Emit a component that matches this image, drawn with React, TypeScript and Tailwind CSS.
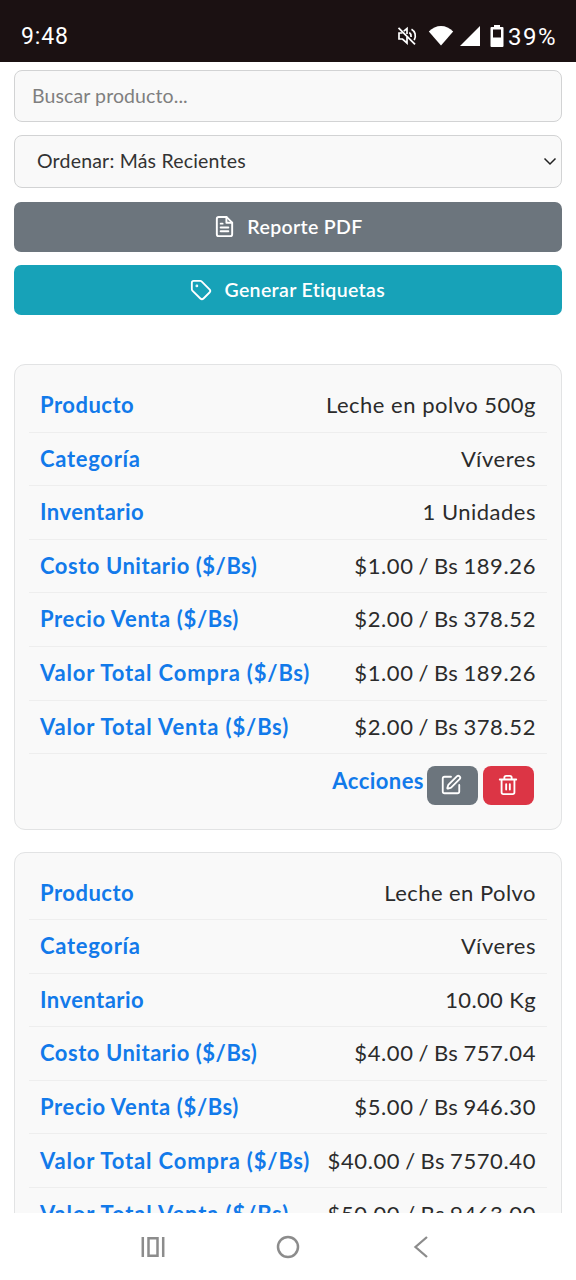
import React from "react";
import { SquarePen, Tag } from "lucide-react";

interface Field {
  label: string;
  value: string;
  labelClass: string;
  valueClass: string;
}

// Price pairs run a bit wider per digit, with tighter gaps around the slash
const price = "tracking-[0.6px] [word-spacing:-1.3px]";

const products: Field[][] = [
  [
    { label: "Producto", value: "Leche en polvo 500g", labelClass: "tracking-[0.5px]", valueClass: "tracking-[0.5px]" },
    { label: "Categoría", value: "Víveres", labelClass: "tracking-[0.7px]", valueClass: "tracking-[0.55px]" },
    { label: "Inventario", value: "1 Unidades", labelClass: "tracking-[0.45px]", valueClass: "tracking-[0.5px]" },
    { label: "Costo Unitario ($/Bs)", value: "$1.00 / Bs 189.26", labelClass: "tracking-[0.53px]", valueClass: price },
    { label: "Precio Venta ($/Bs)", value: "$2.00 / Bs 378.52", labelClass: "tracking-[0.63px]", valueClass: price },
    { label: "Valor Total Compra ($/Bs)", value: "$1.00 / Bs 189.26", labelClass: "tracking-[0.84px]", valueClass: price },
    { label: "Valor Total Venta ($/Bs)", value: "$2.00 / Bs 378.52", labelClass: "tracking-[0.87px]", valueClass: price },
  ],
  [
    { label: "Producto", value: "Leche en Polvo", labelClass: "tracking-[0.5px]", valueClass: "tracking-[0.45px]" },
    { label: "Categoría", value: "Víveres", labelClass: "tracking-[0.7px]", valueClass: "tracking-[0.55px]" },
    { label: "Inventario", value: "10.00 Kg", labelClass: "tracking-[0.45px]", valueClass: "tracking-[0.37px]" },
    { label: "Costo Unitario ($/Bs)", value: "$4.00 / Bs 757.04", labelClass: "tracking-[0.53px]", valueClass: price },
    { label: "Precio Venta ($/Bs)", value: "$5.00 / Bs 946.30", labelClass: "tracking-[0.63px]", valueClass: price },
    { label: "Valor Total Compra ($/Bs)", value: "$40.00 / Bs 7570.40", labelClass: "tracking-[0.84px]", valueClass: price },
    { label: "Valor Total Venta ($/Bs)", value: "$50.00 / Bs 9463.00", labelClass: "tracking-[0.87px]", valueClass: price },
  ],
];

const StatusBar: React.FC = () => (
  <div className="flex h-[61.5px] w-full shrink-0 items-center justify-between bg-[#1b1112] pt-[10px] pr-[19px] pl-[21px] font-['Roboto',sans-serif] text-white">
    <span className="pt-[2px] text-[23px] leading-none tracking-[0.9px]">9:48</span>
    <div className="flex items-center">
      {/* Muted speaker */}
      <svg width="20" height="20" viewBox="0 0 20 20" fill="none" stroke="white" strokeWidth="1.7" className="mr-[11px]">
        <path d="M1.500 1.800l16.500 16.500" />
        <path d="M5.500 7H2v6h3.500l4.500 4v-6M6.800 5.200L10 2.500v5.500" />
        <path d="M12.300 6.500c1.300.8 1.900 2.200 1.800 4.500M14.500 3.200c3.600 2 5 6.500 2.700 11" />
      </svg>
      {/* Wifi */}
      <svg width="26" height="21" viewBox="0 0 26 21" fill="white" className="mr-[6px]">
        <path d="M13 20.500L.8 6.500C7.500-1 18.500-1 25.200 6.500z" />
      </svg>
      {/* Signal */}
      <svg width="20" height="20" viewBox="0 0 20 20" fill="white" className="mr-[10px]">
        <path d="M20 0v20H0z" />
      </svg>
      {/* Battery */}
      <svg width="14" height="22" viewBox="0 0 14 22" className="mr-[4px]">
        <path fillRule="evenodd" fill="white" d="M4 0h6v2h2.500q1 0 1 1v18q0 1-1 1h-11q-1 0-1-1V3q0-1 1-1H4zM3 4.500v8h8v-8z" />
      </svg>
      <span className="pt-[2px] text-[24px] leading-none tracking-[1.500px]">39%</span>
    </div>
  </div>
);

const ReportIcon: React.FC = () => (
  <svg width="23" height="23" viewBox="0 0 24 24" fill="none" stroke="currentColor" strokeWidth="2" strokeLinejoin="round" strokeLinecap="round">
    <path d="M14 2H6a2 2 0 0 0-2 2v16a2 2 0 0 0 2 2h12a2 2 0 0 0 2-2V8z" />
    <path d="M14 2v6h6M8 9h2M8 13h8M8 17h8" />
  </svg>
);

const TrashIcon: React.FC = () => (
  <svg width="22" height="22" viewBox="0 0 24 24" fill="none" stroke="currentColor" strokeWidth="2" strokeLinejoin="round" strokeLinecap="round">
    <path d="M3 6h18M19 6v14a2 2 0 0 1-2 2H7a2 2 0 0 1-2-2V6M8 6V4a2 2 0 0 1 2-2h4a2 2 0 0 1 2 2v2M10 11v6M14 11v6" />
  </svg>
);

const ProductCard: React.FC<{ fields: Field[] }> = ({ fields }) => (
  <div className="mb-[21.500px] h-[466px] shrink-0 rounded-[11px] border border-[#e2e3e4] bg-[#f9f9f9] px-[14px] pt-[14px]">
    {fields.map((field) => (
      <div
        key={field.label}
        className="flex h-[53.6px] items-center justify-between border-b border-[#eeeeee] px-[11px] pb-[1.500px] text-[22px]"
      >
        <span className={`font-bold whitespace-nowrap text-[#127aea] ${field.labelClass}`}>{field.label}</span>
        <span className={`whitespace-nowrap text-[#2b2b2b] ${field.valueClass}`}>{field.value}</span>
      </div>
    ))}
    <div className="flex justify-end pt-[11.500px] pr-[13.500px] text-[22px]">
      <span className="mr-[3px] leading-[29px] font-bold tracking-[0.45px] text-[#127aea]">Acciones</span>
      <button className="mr-[5.500px] flex h-[39.500px] w-[50.500px] items-center justify-center rounded-[8px] bg-[#6c757d] pr-[2px] text-white">
        <SquarePen size={22} />
      </button>
      <button className="flex h-[39.500px] w-[50.500px] items-center justify-center rounded-[8px] bg-[#dc3545] pr-[1px] text-white">
        <TrashIcon />
      </button>
    </div>
  </div>
);

const App: React.FC = () => {
  return (
    <div className="flex h-[1280px] w-[576px] flex-col overflow-hidden bg-white font-['Lato',sans-serif]">
      <StatusBar />

      {/* Inventory list */}
      <div className="flex min-h-0 flex-1 flex-col overflow-hidden px-[14px] pt-[8.500px]">
        <div className="flex h-[52px] shrink-0 items-center rounded-[8px] border border-[#d2d3d4] bg-[#f9f9f9] px-[17px] text-[19.500px] tracking-[0.1px] text-[#7f7f7f]">
          Buscar producto...
        </div>
        <div className="mt-[13px] flex h-[53px] shrink-0 items-center justify-between rounded-[8px] border border-[#d2d3d4] bg-[#f9f9f9] pr-[4px] pb-[1px] pl-[22px] text-[19.500px] tracking-[0.2px] text-[#333]">
          Ordenar: Más Recientes
          <svg width="14" height="9" viewBox="0 0 14 9" fill="none" stroke="#222" strokeWidth="1.500" className="mt-[1px]">
            <path d="M1.500 1.500L7 7l5.500-5.500" />
          </svg>
        </div>
        <button className="mt-[14px] flex h-[49.500px] shrink-0 items-center justify-center gap-[11px] rounded-[7px] bg-[#6c757d] pb-[1px] text-[19.500px] font-semibold tracking-[0.35px] text-white">
          <ReportIcon />
          Reporte PDF
        </button>
        <button className="mt-[13.500px] mb-[49.500px] flex h-[49.500px] shrink-0 items-center justify-center gap-[12.500px] rounded-[7px] bg-[#17a2b8] pr-[1px] text-[19.500px] font-semibold tracking-[0.35px] text-white">
          <Tag size={22} />
          Generar Etiquetas
        </button>

        {products.map((fields, i) => (
          <ProductCard key={i} fields={fields} />
        ))}
      </div>

      {/* Android navigation */}
      <div className="flex h-[67px] shrink-0 items-center bg-white pl-[141px]">
        <svg width="24" height="24" viewBox="0 0 24 24" fill="none" stroke="#8c8c8c" strokeWidth="2.500">
          <path d="M1.800 2v20M22.200 2v20M7.500 3.200h9v17.600h-9z" />
        </svg>
        <svg width="24" height="24" viewBox="0 0 24 24" fill="none" stroke="#8c8c8c" strokeWidth="2.500" className="ml-[111px]">
          <circle cx="12" cy="12" r="10" />
        </svg>
        <svg width="16" height="24" viewBox="0 0 16 24" fill="none" stroke="#8c8c8c" strokeWidth="2.300" className="ml-[113px]">
          <path d="M14 2L2.500 12L14 22" />
        </svg>
      </div>
    </div>
  );
};

export default App;
